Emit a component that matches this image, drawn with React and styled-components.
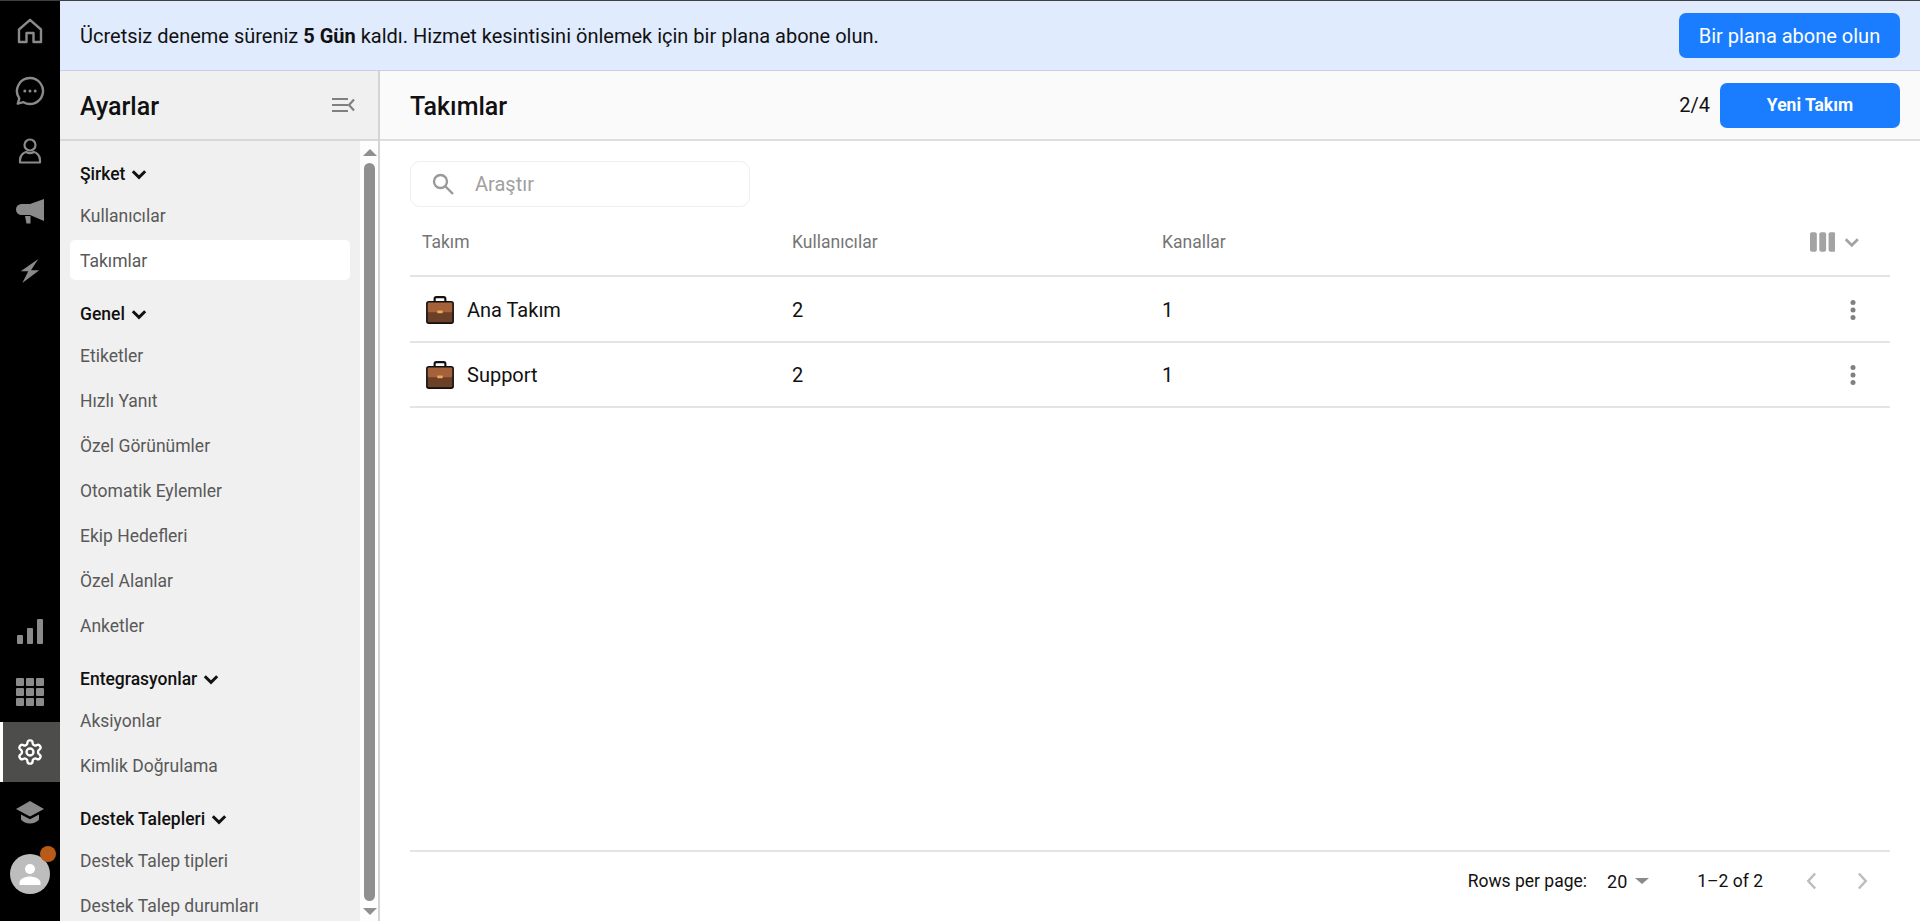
import React from 'react';
import styled, { createGlobalStyle } from 'styled-components';

const GlobalStyle = createGlobalStyle`
  html, body {
    margin: 0;
    padding: 0;
    height: 100%;
    overflow: hidden;
    background: #fff;
    font-family: Roboto, "Liberation Sans", sans-serif;
  }
  * { box-sizing: border-box; }
`;

const Page = styled.div`
  display: flex;
  flex-direction: column;
  height: 921px;
  width: 1920px;
  border-top: 1px solid #3c4043;
  overflow: hidden;
`;

const Body = styled.div`
  flex: 1;
  display: flex;
  min-height: 0;
`;

const Rail = styled.nav`
  width: 60px;
  flex: none;
  background: #000;
  display: flex;
  flex-direction: column;
  justify-content: space-between;
  padding-bottom: 17px;
`;

const RailGroup = styled.div`
  display: flex;
  flex-direction: column;
`;

const RailButton = styled.div`
  height: 60px;
  display: flex;
  align-items: center;
  justify-content: center;
  color: ${p => (p.$active ? '#fff' : '#8a8a8a')};
  background: ${p => (p.$active ? '#4d4e4c' : 'transparent')};
  border-left: ${p => (p.$active ? '3px solid #fff' : 'none')};
  padding-right: ${p => (p.$active ? '3px' : '0')};
`;

const Avatar = styled.div`
  position: relative;
  width: 40px;
  height: 40px;
  margin: 12px 10px 10px;
  border-radius: 50%;
  background: #bdbdbd;
  display: flex;
  align-items: center;
  justify-content: center;
  color: #fff;
`;

const AvatarBadge = styled.span`
  position: absolute;
  top: -8px;
  right: -6px;
  width: 16px;
  height: 16px;
  border-radius: 50%;
  background: #b85a18;
`;

const Content = styled.div`
  flex: 1;
  display: flex;
  flex-direction: column;
  min-width: 0;
`;

const Banner = styled.div`
  height: 70px;
  flex: none;
  background: #e0ebfe;
  border-bottom: 1px solid #c6d0e4;
  display: flex;
  align-items: center;
  justify-content: space-between;
  padding: 0 20px;
  font-size: 20px;
  color: #111;
`;

const PrimaryButton = styled.button`
  border: none;
  border-radius: 7px;
  background: #1a7dff;
  color: #fff;
  font-family: inherit;
  height: 45px;
  font-size: ${p => (p.$strong ? '17.5px' : '20px')};
  font-weight: ${p => (p.$strong ? 700 : 400)};
  width: ${p => p.$width}px;
  padding: 0;
`;

const Workspace = styled.div`
  flex: 1;
  display: flex;
  min-height: 0;
`;

const Sidebar = styled.aside`
  width: 320px;
  flex: none;
  display: flex;
  flex-direction: column;
  border-right: 2px solid #d4d4d4;
  background: #f0f0f0;
`;

const SidebarHead = styled.div`
  height: 70px;
  flex: none;
  display: flex;
  align-items: center;
  justify-content: space-between;
  padding: 0 23px 0 20px;
  border-bottom: 2px solid #d8d8d8;
  color: #808080;
`;

const SidebarTitle = styled.h2`
  margin: 0;
  padding-top: 3px;
  font-size: 25px;
  font-weight: 500;
  color: #111;
`;

const SidebarBody = styled.div`
  flex: 1;
  display: flex;
  min-height: 0;
`;

const NavList = styled.div`
  flex: 1;
  overflow: hidden;
  padding: 8px 10px 0;
`;

const NavGroup = styled.section`
  margin-bottom: 9px;
`;

const NavHeading = styled.div`
  height: 45px;
  display: flex;
  align-items: center;
  gap: 5px;
  padding: 4px 10px 0;
  margin-bottom: 1px;
  font-size: 17.5px;
  font-weight: 500;
  color: #111;
`;

const NavItem = styled.div`
  height: 40px;
  margin-bottom: 5px;
  padding: 1px 10px 0;
  display: flex;
  align-items: center;
  font-size: 17.5px;
  color: #595959;
  border-radius: 5px;
  background: ${p => (p.$active ? '#fff' : 'transparent')};
`;

const ScrollTrack = styled.div`
  width: 18px;
  flex: none;
  background: #fdfdfd;
  display: flex;
  flex-direction: column;
  align-items: center;
  padding: 8px 0 6px 1px;
  gap: 7px;
`;

const ScrollThumb = styled.div`
  flex: 1;
  width: 11px;
  border-radius: 6px;
  background: #8f8f8f;
`;

const ScrollArrow = styled.span`
  width: 0;
  height: 0;
  border-left: 7px solid transparent;
  border-right: 7px solid transparent;
  border-bottom: ${p => (p.$down ? 'none' : '7px solid #8f8f8f')};
  border-top: ${p => (p.$down ? '7px solid #8f8f8f' : 'none')};
`;

const Main = styled.main`
  flex: 1;
  display: flex;
  flex-direction: column;
  min-width: 0;
`;

const MainHead = styled.div`
  height: 70px;
  flex: none;
  display: flex;
  align-items: center;
  justify-content: space-between;
  padding: 0 20px 0 30px;
  background: #fafafa;
  border-bottom: 2px solid #dedede;
`;

const MainTitle = styled.h1`
  margin: 0;
  padding-top: 2px;
  font-size: 25px;
  font-weight: 500;
  color: #111;
`;

const HeadActions = styled.div`
  display: flex;
  align-items: center;
  gap: 10px;
  font-size: 20px;
  color: #111;
`;

const MainBody = styled.div`
  flex: 1;
  display: flex;
  flex-direction: column;
  min-height: 0;
  padding: 20px 30px 0;
`;

const SearchBox = styled.div`
  width: 340px;
  height: 46px;
  flex: none;
  display: flex;
  align-items: center;
  gap: 20px;
  padding-left: 20px;
  border: 1px solid #eeeeee;
  border-radius: 10px;
  color: #999;
`;

const SearchText = styled.span`
  font-size: 20px;
  color: #a0a0a0;
`;

const Table = styled.div`
  flex: 1;
  display: flex;
  flex-direction: column;
`;

const HeaderRow = styled.div`
  height: 70px;
  padding-top: 1px;
  display: grid;
  grid-template-columns: 370px 370px 1fr 80px;
  align-items: center;
  border-bottom: 2px solid #e4e4e4;
  font-size: 17.5px;
  color: #757575;
`;

const Row = styled.div`
  height: 65.5px;
  padding-top: 2px;
  display: grid;
  grid-template-columns: 370px 370px 1fr 80px;
  align-items: center;
  border-bottom: 2px solid #e4e4e4;
  font-size: 20px;
  color: #111;
`;

const Cell = styled.div`
  padding-left: 12px;
`;

const NameCell = styled.div`
  display: flex;
  align-items: center;
  gap: 12px;
  padding-left: 15px;
`;

const ActionCell = styled.div`
  display: flex;
  justify-content: flex-end;
  align-items: center;
  gap: 8px;
  padding-right: 34px;
  color: #808080;
`;

const ColumnCell = styled(ActionCell)`
  color: #a3a3a3;
  padding-right: 29px;
`;

const Spacer = styled.div`
  flex: 1;
`;

const Footer = styled.div`
  height: 71px;
  flex: none;
  border-top: 2px solid #e4e4e4;
  display: flex;
  align-items: center;
  justify-content: flex-end;
  padding: 0 18px 11px 0;
  font-size: 17.5px;
  color: #111;
`;

const RowsLabel = styled.span`
  margin-right: 20px;
`;

const PageSize = styled.div`
  display: flex;
  align-items: center;
  gap: 8px;
  margin-right: 48px;
  font-size: 18px;
`;

const Caret = styled.span`
  width: 0;
  height: 0;
  border-left: 7px solid transparent;
  border-right: 7px solid transparent;
  border-top: 6px solid #8a8a8a;
`;

const PageRange = styled.span`
  margin-right: 39px;
`;

const Pager = styled.div`
  display: flex;
  gap: 30px;
  color: #bdbdbd;
`;

const Chevron = ({ size = 16, color = 'currentColor', width = 2.6, dir = 'down' }) => {
  const paths = {
    down: 'M2.500 5.500 8 11l5.500-5.500',
    left: 'M10.500 2 5 8l5.500 6',
    right: 'M5.500 2l5.500 6-5.500 6',
  };
  return (
    <svg width={size} height={size} viewBox="0 0 16 16" fill="none" stroke={color} strokeWidth={width}>
      <path d={paths[dir]} />
    </svg>
  );
};

const HomeIcon = () => (
  <svg width="26" height="26" viewBox="0 0 26 26" fill="none" stroke="currentColor" strokeWidth="2.400" strokeLinejoin="round">
    <path d="M2 11.500 13 1.800l11 9.700V24h-7.500v-9h-7v9H2z" />
  </svg>
);

const ChatIcon = () => (
  <svg width="30" height="30" viewBox="0 0 30 30" fill="none">
    <path d="M15 2a13 13 0 1 1-6.600 24.200L2.800 27.600l1.500-5.200A13 13 0 0 1 15 2z" stroke="currentColor" strokeWidth="2.400" strokeLinejoin="round" />
    <circle cx="9.800" cy="15" r="1.500" fill="currentColor" />
    <circle cx="15" cy="15" r="1.500" fill="currentColor" />
    <circle cx="20.200" cy="15" r="1.500" fill="currentColor" />
  </svg>
);

const PersonIcon = () => (
  <svg width="24" height="26" viewBox="0 0 24 26" fill="none" stroke="currentColor" strokeWidth="2.200">
    <circle cx="12" cy="7" r="5.500" />
    <path d="M2 24.500v-2.500c0-4.500 3.500-7.500 6-8 2.500 1.400 5.500 1.400 8 0 2.500.5 6 3.500 6 8v2.500z" strokeLinejoin="round" />
  </svg>
);

const MegaphoneIcon = () => (
  <svg width="28" height="25" viewBox="0 0 28 25" fill="currentColor">
    <path d="M28 0v22L14 16H5.500a5.500 5.500 0 0 1 0-11H14z" />
    <path d="M9 17h5.500v7.500H10.500z" />
  </svg>
);

const BoltIcon = () => (
  <svg width="20" height="24" viewBox="0 0 20 24" fill="currentColor">
    <path d="M18.300 0 .7 12.300h7.600L2.300 24l17-12.700H11z" />
  </svg>
);

const ChartIcon = () => (
  <svg width="26" height="26" viewBox="0 0 26 26" fill="currentColor">
    <rect x="0" y="16" width="6" height="9" rx="1" />
    <rect x="10" y="9" width="6" height="16" rx="1" />
    <rect x="20" y="0" width="6" height="25" rx="1" />
  </svg>
);

const GridIcon = () => (
  <svg width="28" height="28" viewBox="0 0 28 28" fill="currentColor">
    {[0, 10, 20].flatMap(y =>
      [0, 10, 20].map(x => <rect key={`${x}-${y}`} x={x} y={y} width="8" height="8" rx="1" />)
    )}
  </svg>
);

const GearIcon = () => (
  <svg width="28" height="28" viewBox="0 0 24 24" fill="none" stroke="currentColor" strokeWidth="2" strokeLinecap="round" strokeLinejoin="round">
    <path d="M12.220 2h-.440a2 2 0 0 0-2 2v.180a2 2 0 0 1-1 1.730l-.430.250a2 2 0 0 1-2 0l-.150-.080a2 2 0 0 0-2.730.730l-.220.380a2 2 0 0 0 .730 2.730l.150.100a2 2 0 0 1 1 1.720v.510a2 2 0 0 1-1 1.740l-.150.090a2 2 0 0 0-.730 2.730l.220.380a2 2 0 0 0 2.730.730l.150-.080a2 2 0 0 1 2 0l.430.250a2 2 0 0 1 1 1.730V20a2 2 0 0 0 2 2h.440a2 2 0 0 0 2-2v-.180a2 2 0 0 1 1-1.730l.430-.250a2 2 0 0 1 2 0l.150.080a2 2 0 0 0 2.730-.730l.220-.390a2 2 0 0 0-.730-2.730l-.150-.080a2 2 0 0 1-1-1.740v-.500a2 2 0 0 1 1-1.740l.150-.090a2 2 0 0 0 .730-2.730l-.220-.380a2 2 0 0 0-2.730-.730l-.150.080a2 2 0 0 1-2 0l-.430-.250a2 2 0 0 1-1-1.730V4a2 2 0 0 0-2-2z" />
    <circle cx="12" cy="12" r="3" />
  </svg>
);

const CapIcon = () => (
  <svg width="28" height="24" viewBox="0 0 28 24" fill="currentColor">
    <path d="M14 1 0 9l14 7.500L28 9z" />
    <path d="M5 14.500v5c2 2.500 5.500 4 9 4s7-1.500 9-4v-5l-9 4.800z" />
  </svg>
);

const AvatarIcon = () => (
  <svg width="24" height="24" viewBox="0 0 24 24" fill="currentColor">
    <circle cx="12" cy="7" r="5" />
    <path d="M1.500 23v-2.500c0-4 7-6 10.500-6s10.500 2 10.500 6V23z" />
  </svg>
);

const CollapseIcon = () => (
  <svg width="23" height="18" viewBox="0 0 23 18" fill="none" stroke="currentColor" strokeWidth="2.200">
    <path d="M0 3h16M0 9h16M0 15h16" />
    <path d="M22 3.500 17 9l5 5.500" />
  </svg>
);

const SearchIcon = () => (
  <svg width="24" height="24" viewBox="0 0 24 24" fill="none" stroke="currentColor" strokeWidth="2.400">
    <circle cx="9.500" cy="9.500" r="6.500" />
    <path d="m14.500 14.500 7.500 7.500" />
  </svg>
);

const ColumnsIcon = () => (
  <svg width="26" height="20" viewBox="0 0 26 20" fill="currentColor">
    <rect x="0" y="0" width="7" height="20" rx="2" />
    <rect x="9.500" y="0" width="7" height="20" rx="2" />
    <rect x="19" y="0" width="7" height="20" rx="2" />
  </svg>
);

const DotsIcon = () => (
  <svg width="6" height="20" viewBox="0 0 6 20" fill="currentColor">
    <circle cx="3" cy="2.500" r="2.500" />
    <circle cx="3" cy="10" r="2.500" />
    <circle cx="3" cy="17.500" r="2.500" />
  </svg>
);

const BriefcaseIcon = () => (
  <svg width="30" height="30" viewBox="0 0 28 28">
    <path d="M9 6V3.500A1.500 1.500 0 0 1 10.500 2h7A1.500 1.500 0 0 1 19 3.500V6" fill="none" stroke="#111" strokeWidth="2" />
    <rect x="1" y="5.500" width="26" height="21.500" rx="2.500" fill="#111" />
    <rect x="2.500" y="15" width="23" height="10.500" rx="1" fill="#6b4026" />
    <rect x="2.500" y="7" width="23" height="9" rx="1" fill="#a5623a" />
    <rect x="11.500" y="14.500" width="5" height="2.500" fill="#eaa860" />
  </svg>
);

const navGroups = [
  { title: 'Şirket', items: ['Kullanıcılar', 'Takımlar'] },
  { title: 'Genel', items: ['Etiketler', 'Hızlı Yanıt', 'Özel Görünümler', 'Otomatik Eylemler', 'Ekip Hedefleri', 'Özel Alanlar', 'Anketler'] },
  { title: 'Entegrasyonlar', items: ['Aksiyonlar', 'Kimlik Doğrulama'] },
  { title: 'Destek Talepleri', items: ['Destek Talep tipleri', 'Destek Talep durumları'] },
];

const teams = [
  { name: 'Ana Takım', users: 2, channels: 1 },
  { name: 'Support', users: 2, channels: 1 },
];

const App = () => (
  <Page>
    <GlobalStyle />
    <Body>
      <Rail>
        <RailGroup>
          <RailButton><HomeIcon /></RailButton>
          <RailButton><ChatIcon /></RailButton>
          <RailButton><PersonIcon /></RailButton>
          <RailButton><MegaphoneIcon /></RailButton>
          <RailButton><BoltIcon /></RailButton>
        </RailGroup>
        <RailGroup>
          <RailButton><ChartIcon /></RailButton>
          <RailButton><GridIcon /></RailButton>
          <RailButton $active><GearIcon /></RailButton>
          <RailButton><CapIcon /></RailButton>
          <Avatar>
            <AvatarIcon />
            <AvatarBadge />
          </Avatar>
        </RailGroup>
      </Rail>
      <Content>
        <Banner>
          <span>Ücretsiz deneme süreniz <b>5 Gün</b> kaldı. Hizmet kesintisini önlemek için bir plana abone olun.</span>
          <PrimaryButton $width={221}>Bir plana abone olun</PrimaryButton>
        </Banner>
        <Workspace>
          <Sidebar>
            <SidebarHead>
              <SidebarTitle>Ayarlar</SidebarTitle>
              <CollapseIcon />
            </SidebarHead>
            <SidebarBody>
              <NavList>
                {navGroups.map(group => (
                  <NavGroup key={group.title}>
                    <NavHeading>
                      {group.title}
                      <Chevron size={18} color="#111" />
                    </NavHeading>
                    {group.items.map(item => (
                      <NavItem key={item} $active={item === 'Takımlar'}>{item}</NavItem>
                    ))}
                  </NavGroup>
                ))}
              </NavList>
              <ScrollTrack>
                <ScrollArrow />
                <ScrollThumb />
                <ScrollArrow $down />
              </ScrollTrack>
            </SidebarBody>
          </Sidebar>
          <Main>
            <MainHead>
              <MainTitle>Takımlar</MainTitle>
              <HeadActions>
                2/4
                <PrimaryButton $strong $width={180}>Yeni Takım</PrimaryButton>
              </HeadActions>
            </MainHead>
            <MainBody>
              <SearchBox>
                <SearchIcon />
                <SearchText>Araştır</SearchText>
              </SearchBox>
              <Table>
                <HeaderRow>
                  <Cell>Takım</Cell>
                  <Cell>Kullanıcılar</Cell>
                  <Cell>Kanallar</Cell>
                  <ColumnCell>
                    <ColumnsIcon />
                    <Chevron size={18} width={2.400} />
                  </ColumnCell>
                </HeaderRow>
                {teams.map(team => (
                  <Row key={team.name}>
                    <NameCell>
                      <BriefcaseIcon />
                      {team.name}
                    </NameCell>
                    <Cell>{team.users}</Cell>
                    <Cell>{team.channels}</Cell>
                    <ActionCell><DotsIcon /></ActionCell>
                  </Row>
                ))}
                <Spacer />
                <Footer>
                  <RowsLabel>Rows per page:</RowsLabel>
                  <PageSize>20 <Caret /></PageSize>
                  <PageRange>1–2 of 2</PageRange>
                  <Pager>
                    <Chevron size={20} width={2} dir="left" />
                    <Chevron size={20} width={2} dir="right" />
                  </Pager>
                </Footer>
              </Table>
            </MainBody>
          </Main>
        </Workspace>
      </Content>
    </Body>
  </Page>
);

export default App;
